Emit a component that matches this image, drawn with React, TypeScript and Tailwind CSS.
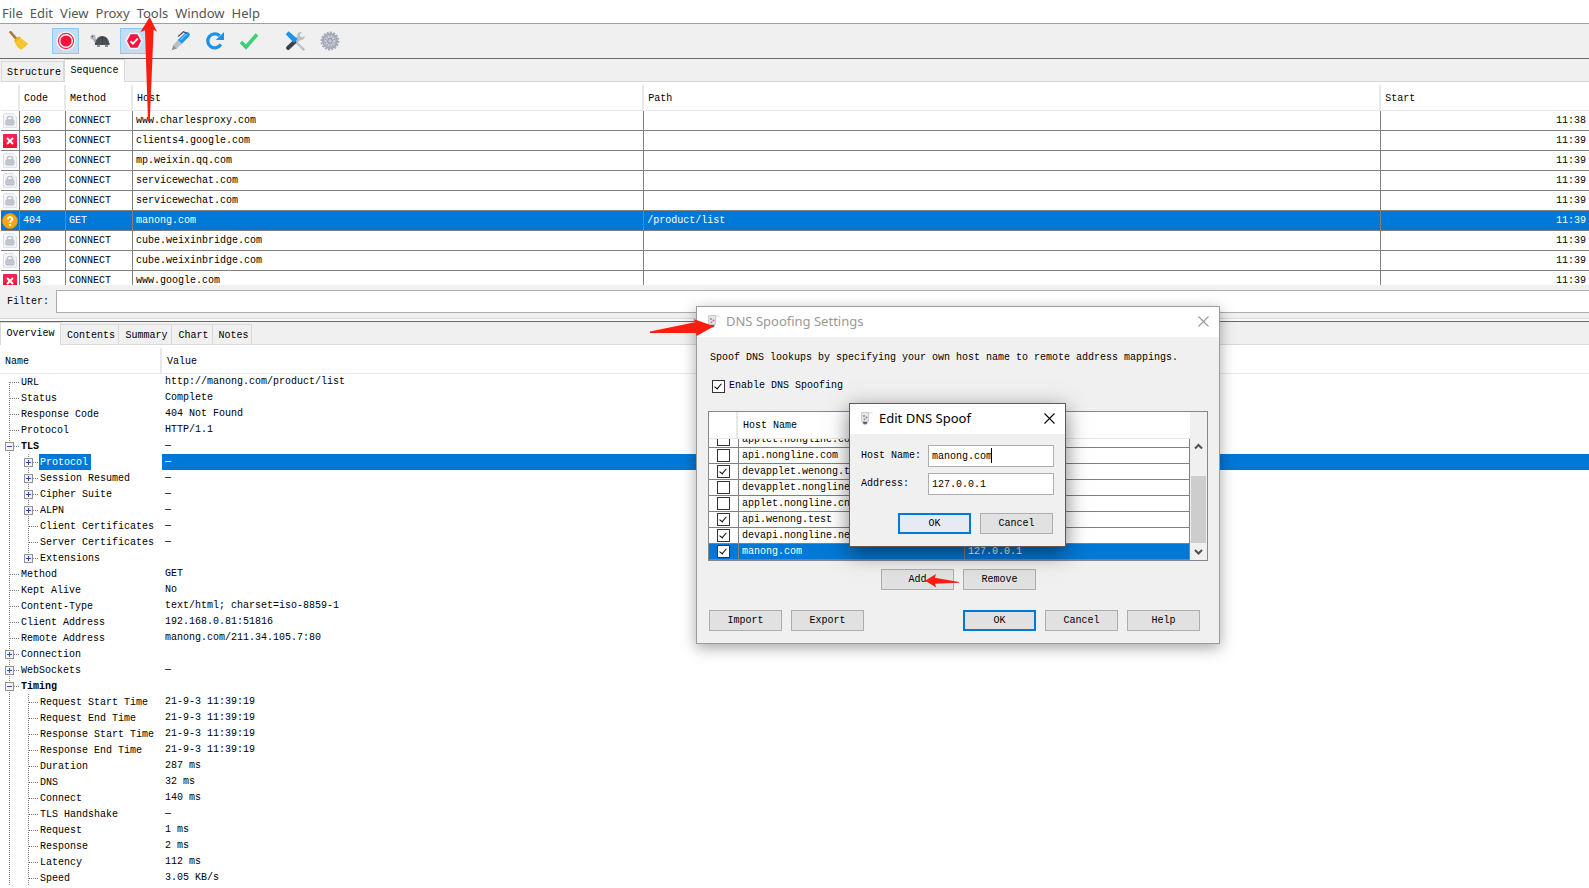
import type { ReactNode } from "react";

const UI = "font-['Noto_Sans',sans-serif]";

/* ---------- toolbar icons ---------- */

const Broom = () => (
  <svg width="20" height="20" viewBox="0 0 20 20">
    <path d="M1.500 1.200 8 8.600" stroke="#a97a45" strokeWidth="2.600" strokeLinecap="round" />
    <path d="M5.400 9 9.800 5.400 19 12.600c-1.200 2-3.600 4-6.800 6.200C8.500 17 6 13.500 5.400 9z" fill="#fbc730" />
    <path d="M5.400 9 9.800 5.400l1.800 1.400-5.600 4.600z" fill="#f2ad20" />
    <path d="M8.500 12.500l4 4.800M11 10.500l4.800 4.300" stroke="#eab020" strokeWidth=".7" />
  </svg>
);

const Record = () => (
  <svg width="20" height="20" viewBox="0 0 20 20">
    <circle cx="10" cy="10" r="9.600" fill="#f8f4f6" />
    <circle cx="10" cy="10" r="7.600" fill="none" stroke="#f0274f" strokeWidth="1.200" />
    <circle cx="10" cy="10" r="5.600" fill="#f7123a" />
  </svg>
);

const Turtle = () => (
  <svg width="20" height="16" viewBox="0 0 20 16">
    <path d="M4 5.500C5.500 8 5.500 10 8 11.500" stroke="#a5a9af" strokeWidth="2.400" fill="none" />
    <circle cx="3" cy="4" r="2.600" fill="#b4b8be" />
    <circle cx="2.400" cy="3.500" r=".7" fill="#444a52" />
    <path d="M5.200 10.500C5.600 5.500 9 3 12.500 3S18.800 6 19.300 10.500z" fill="#50555c" />
    <path d="M9 9V6l3.500-1.500L16 6v3M12.500 4v5.500" stroke="#353a40" fill="none" strokeWidth=".8" />
    <path d="M5 11h14.500" stroke="#3d4248" strokeWidth="1.800" />
    <path d="M7 11.800h3v2.200H7zM15 11.800h3v2.200h-3z" fill="#8b9096" />
  </svg>
);

const Breakpoint = () => (
  <svg width="18" height="18" viewBox="0 0 18 18">
    <path d="M5 1.500h8L17 9l-4 7.500H5L1 9z" fill="#f5143f" stroke="#f7f1f5" strokeWidth="1.600" />
    <path d="M5.500 9.200 8 11.600 12.700 6.600" stroke="#fff" strokeWidth="1.900" fill="none" />
  </svg>
);

const Pen = () => (
  <svg width="20" height="20" viewBox="0 0 20 20">
    <path d="M.8 19.200 2.300 14 6 17.600z" fill="#8c9198" />
    <path d="M2.200 14.200 6.800 9l4 3.800L5.800 17.600z" fill="#b8bdc6" />
    <path d="M6.800 9 14.300 1.800c1.300-1.200 2.600-.9 3.600 0s1.300 2.300.2 3.600L10.800 12.800z" fill="#1d97ee" />
    <path d="M9.500 9 16 2.600" stroke="#6cc0f8" strokeWidth="1.400" />
    <path d="M7 5.600 12.500 .8 16 2.500" fill="none" stroke="#3f4852" strokeWidth="1.200" />
  </svg>
);

const Refresh = () => (
  <svg width="20" height="20" viewBox="0 0 20 20">
    <path d="M15.800 13.400A7 7 0 1 1 14.600 4.800" fill="none" stroke="#1b93ee" strokeWidth="3.300" />
    <path d="M19 1v8h-8.200z" fill="#1b93ee" />
  </svg>
);

const Tick = () => (
  <svg width="20" height="18" viewBox="0 0 20 18">
    <path d="M2 10 7 15 18 2.500" fill="none" stroke="#3fcf73" strokeWidth="3.600" />
  </svg>
);

const Wrenches = () => (
  <svg width="21" height="20" viewBox="0 0 21 20">
    <path d="M18.500 18.500 9.500 9.500" stroke="#a9aebb" strokeWidth="2.200" strokeLinecap="round" />
    <path d="M3 17 12 8.500" stroke="#3b4148" strokeWidth="4" strokeLinecap="round" />
    <path d="M9.500 9 12.200 11.600 15.500 9c2.700.3 4.500-1.700 4.300-4.600l-2.300 2-2.300-.8-.4-2.400L17 1c-3.400-.6-5.300 1.500-4.700 4.300z" fill="#b9bec9" />
    <path d="M.8 3.200 3.600.2 12.600 8 9 12z" fill="#1c93ec" />
    <path d="M11.500 11.500l6.500 7" stroke="#c8ccd6" strokeWidth="1.400" />
  </svg>
);

const Gear = () => (
  <svg width="20" height="20" viewBox="0 0 20 20">
    <circle cx="10" cy="10" r="8.700" fill="none" stroke="#a3a7b5" strokeWidth="1.500" strokeDasharray="2 1.400" />
    <circle cx="10" cy="10" r="7.300" fill="#b4b8c4" stroke="#a0a4b2" strokeWidth="1.400" />
    <circle cx="10" cy="10" r="4.900" fill="#d5d8e0" />
    <path d="M10 4.500v11M4.800 8.300l10.400 3.400M6.800 14.500l6.400-9M13.200 14.500l-6.400-9M15.200 8.300 4.800 11.700" stroke="#a0a4b2" strokeWidth="1.100" />
    <circle cx="10" cy="10" r="2.300" fill="#c6c9d3" stroke="#9699a8" strokeWidth="1" />
  </svg>
);

/* ---------- row status icons ---------- */

const LockPage = () => (
  <svg width="14" height="16" viewBox="0 0 14 16">
    <path d="M1.500.5h8.500L13.500 4v10.500h-13v-13z" fill="#f3f5f8" stroke="#dcdfe4" />
    <path d="M10 .5V4h3.500" fill="#fff" stroke="#dcdfe4" strokeWidth=".8" />
    <path d="M4.200 7V5.800a2.700 2.500 0 0 1 5.400 0V7" fill="none" stroke="#bcc0ca" strokeWidth="1.300" />
    <rect x="2.200" y="6.300" width="9.400" height="6.200" rx="2.600" fill="#b9bec9" />
    <path d="M2.600 8.400h8.600M2.600 10.400h8.600" stroke="#d0d4db" strokeWidth=".7" />
  </svg>
);

const ErrorMark = () => (
  <svg width="14" height="14" viewBox="0 0 14 14">
    <rect width="14" height="14" rx="1" fill="#f52150" />
    <path d="M0 8h14v5a1 1 0 0 1-1 1H1a1 1 0 0 1-1-1z" fill="#ee1735" />
    <path d="M4 4l6 6M10 4l-6 6" stroke="#fff" strokeWidth="2" />
  </svg>
);

const Question = () => (
  <svg width="16" height="16" viewBox="0 0 16 16">
    <circle cx="8" cy="8" r="7.600" fill="#f9a51a" stroke="#e08c10" strokeWidth=".8" />
    <path d="M5.800 6.300c0-3 4.600-2.900 4.600-.2C10.400 7.900 8.100 7.700 8.100 9.800" fill="none" stroke="#fff" strokeWidth="1.700" />
    <circle cx="8.100" cy="12" r="1.100" fill="#fff" />
  </svg>
);

const Jug = () => (
  <svg width="13" height="14" viewBox="0 0 13 14">
    <path d="M1.500 1.500h7.300l-.4 8.500L6.500 13h-3L1.700 10z" fill="#e3e6e6" stroke="#bcc0c0" strokeWidth=".8" />
    <path d="M8.800 3c1.500-2.600 3.200-2 3.500.3" fill="none" stroke="#d5d8d8" strokeWidth=".9" />
    <path d="M2.600 10.800h5L6.300 13.300H3.800z" fill="#5d6264" />
    <circle cx="4" cy="5" r="1" fill="#5fae7c" />
    <circle cx="6.500" cy="6.500" r="1" fill="#d8607c" />
    <circle cx="4.500" cy="8.300" r=".9" fill="#6c8fd0" />
  </svg>
);

const Cross = () => (
  <svg width="11" height="11" viewBox="0 0 11 11">
    <path d="M.5.500l10 10M10.500.500l-10 10" stroke="currentColor" strokeWidth="1.100" />
  </svg>
);

/* ---------- shared controls ---------- */

function ToolButton({ label, on, children }: { label: string; on?: boolean; children: ReactNode }) {
  return (
    <button
      aria-label={label}
      className={`flex h-[26px] w-[27px] items-center justify-center border ${on ? "border-[#90c8f6] bg-[#c1dcf3]" : "border-transparent"}`}
    >
      {children}
    </button>
  );
}

function PushButton({ children, primary, focus }: { children: string; primary?: boolean; focus?: boolean }) {
  const look = primary
    ? `border-2 border-[#0078d7] ${focus ? "bg-[#e5eaf3]" : "bg-[#e1e1e1]"}`
    : "border border-[#adadad] bg-[#e1e1e1]";
  return <button className={`h-[21px] w-[73px] leading-3 ${look}`}>{children}</button>;
}

function Tick13({ checked, label }: { checked?: boolean; label: string }) {
  return (
    <input
      type="checkbox"
      aria-label={label}
      defaultChecked={checked}
      className="block size-[13px] shrink-0 appearance-none border border-[#333] bg-white checked:before:mt-px checked:before:ml-[3px] checked:before:block checked:before:h-[7px] checked:before:w-[4px] checked:before:rotate-[40deg] checked:before:border-r checked:before:border-b checked:before:border-black"
    />
  );
}

function Tabs({ items, active }: { items: { name: string; width: string }[]; active: number }) {
  return (
    <div role="tablist" className="flex h-[23px] items-end border-b border-[#d9d9d9] bg-[#f0f0f0]">
      {items.map((t, i) => (
        <button
          key={t.name}
          role="tab"
          aria-selected={i === active}
          className={
            i === active
              ? `-mb-px h-[23px] border border-b-0 border-[#d9d9d9] bg-white ${t.width}`
              : `h-[20px] border-t border-r border-[#d9d9d9] pt-[3px] pl-[3px] first:border-l ${t.width}`
          }
        >
          {t.name}
        </button>
      ))}
    </div>
  );
}

/* ---------- session sequence ---------- */

type Session = { kind: "ok" | "error" | "warn"; code: string; method: string; host: string; path?: string; start: string };

const sessions: Session[] = [
  { kind: "ok", code: "200", method: "CONNECT", host: "www.charlesproxy.com", start: "11:38" },
  { kind: "error", code: "503", method: "CONNECT", host: "clients4.google.com", start: "11:39" },
  { kind: "ok", code: "200", method: "CONNECT", host: "mp.weixin.qq.com", start: "11:39" },
  { kind: "ok", code: "200", method: "CONNECT", host: "servicewechat.com", start: "11:39" },
  { kind: "ok", code: "200", method: "CONNECT", host: "servicewechat.com", start: "11:39" },
  { kind: "warn", code: "404", method: "GET", host: "manong.com", path: "/product/list", start: "11:39" },
  { kind: "ok", code: "200", method: "CONNECT", host: "cube.weixinbridge.com", start: "11:39" },
  { kind: "ok", code: "200", method: "CONNECT", host: "cube.weixinbridge.com", start: "11:39" },
  { kind: "error", code: "503", method: "CONNECT", host: "www.google.com", start: "11:39" },
];

function SequenceTable() {
  const th = "h-[26px] border-r-2 border-b border-[#e8e8e8] pt-[3px] pl-1 text-left font-normal last:border-r-0";
  const td = "h-5 border-r border-b border-[#808080] px-[3px] last:border-r-0";
  return (
    <div className="h-[203px] shrink-0 overflow-hidden pt-[3px] pl-px">
      <table className="w-full table-fixed border-separate border-spacing-0">
        <colgroup>
          <col className="w-[19px]" />
          <col className="w-[46px]" />
          <col className="w-[67px]" />
          <col className="w-[32.2%]" />
          <col className="w-[46.400%]" />
          <col />
        </colgroup>
        <thead>
          <tr>
            <th className={th} aria-label="Status" />
            <th className={th}>Code</th>
            <th className={th}>Method</th>
            <th className={th}>Host</th>
            <th className={th}>Path</th>
            <th className={th}>Start</th>
          </tr>
        </thead>
        <tbody>
          {sessions.map((s, i) => (
            <tr key={i} className={s.kind === "warn" ? "bg-[#0078d7] text-white" : ""}>
              <td className="h-5 border-r border-b border-[#808080] p-0">
                <span className="flex justify-center">
                  {s.kind === "ok" ? <LockPage /> : s.kind === "error" ? <ErrorMark /> : <Question />}
                </span>
              </td>
              <td className={td}>{s.code}</td>
              <td className={td}>{s.method}</td>
              <td className={td}>{s.host}</td>
              <td className={td}>{s.path}</td>
              <td className={`${td} text-right`}>{s.start}</td>
            </tr>
          ))}
        </tbody>
      </table>
    </div>
  );
}

/* ---------- overview tree ---------- */

type Node = { name: string; value?: string; depth?: 1; box?: "+" | "-"; first?: boolean; last?: boolean; selected?: boolean };

const nodes: Node[] = [
  { name: "URL", value: "http://manong.com/product/list", first: true },
  { name: "Status", value: "Complete" },
  { name: "Response Code", value: "404 Not Found" },
  { name: "Protocol", value: "HTTP/1.1" },
  { name: "TLS", value: "—", box: "-" },
  { name: "Protocol", value: "—", depth: 1, box: "+", selected: true },
  { name: "Session Resumed", value: "—", depth: 1, box: "+" },
  { name: "Cipher Suite", value: "—", depth: 1, box: "+" },
  { name: "ALPN", value: "—", depth: 1, box: "+" },
  { name: "Client Certificates", value: "—", depth: 1 },
  { name: "Server Certificates", value: "—", depth: 1 },
  { name: "Extensions", depth: 1, box: "+", last: true },
  { name: "Method", value: "GET" },
  { name: "Kept Alive", value: "No" },
  { name: "Content-Type", value: "text/html; charset=iso-8859-1" },
  { name: "Client Address", value: "192.168.0.81:51816" },
  { name: "Remote Address", value: "manong.com/211.34.105.7:80" },
  { name: "Connection", box: "+" },
  { name: "WebSockets", value: "—", box: "+" },
  { name: "Timing", box: "-" },
  { name: "Request Start Time", value: "21-9-3 11:39:19", depth: 1 },
  { name: "Request End Time", value: "21-9-3 11:39:19", depth: 1 },
  { name: "Response Start Time", value: "21-9-3 11:39:19", depth: 1 },
  { name: "Response End Time", value: "21-9-3 11:39:19", depth: 1 },
  { name: "Duration", value: "287 ms", depth: 1 },
  { name: "DNS", value: "32 ms", depth: 1 },
  { name: "Connect", value: "140 ms", depth: 1 },
  { name: "TLS Handshake", value: "—", depth: 1 },
  { name: "Request", value: "1 ms", depth: 1 },
  { name: "Response", value: "2 ms", depth: 1 },
  { name: "Latency", value: "112 ms", depth: 1 },
  { name: "Speed", value: "3.05 KB/s", depth: 1 },
];

function Guides({ node }: { node: Node }) {
  const width = node.depth ? 39 : 20;
  const x = node.depth ? 28.5 : 9.5;
  return (
    <svg width={width} height="16" className="shrink-0" shapeRendering="crispEdges">
      <g stroke="#808080" strokeDasharray="1 1">
        <path d={node.first ? "M9.500 8v8" : "M9.500 0v16"} />
        {node.depth && <path d={node.last ? "M28.500 0v8" : "M28.500 0v16"} />}
        <path d={`M${x} 8.500H${width}`} />
      </g>
      {node.box && (
        <g>
          <rect x={x - 4} y="4.500" width="8" height="8" fill="#f4f4f4" stroke="#919191" />
          <path d={`M${x - 2.5} 8.500h5`} stroke="#2b50a0" />
          {node.box === "+" && <path d={`M${x} 6v5`} stroke="#2b50a0" />}
        </g>
      )}
    </svg>
  );
}

function OverviewTree() {
  const th = "h-[26px] border-b border-[#e8e8e8] pt-[3px] pl-[5px] text-left font-normal";
  return (
    <div className="min-h-0 flex-1 overflow-hidden pt-[3px]">
      <table className="w-full table-fixed border-separate border-spacing-0">
        <colgroup>
          <col className="w-[162px]" />
          <col />
        </colgroup>
        <thead>
          <tr>
            <th className={`${th} border-r-2`}>Name</th>
            <th className={th}>Value</th>
          </tr>
        </thead>
        <tbody>
          {nodes.map((n, i) => (
            <tr key={i}>
              <td className="h-4 p-0 align-top">
                <span className="flex h-4">
                  <Guides node={n} />
                  <span
                    className={`px-px leading-[18px] whitespace-nowrap ${n.selected ? "bg-[#0078d7] pr-[3px] text-white" : ""} ${n.box === "-" ? "font-bold" : ""}`}
                  >
                    {n.name}
                  </span>
                </span>
              </td>
              <td className={`h-4 py-0 pr-0 pl-[3px] align-top leading-4 ${n.selected ? "bg-[#0078d7] text-white" : ""}`}>
                {n.value}
              </td>
            </tr>
          ))}
        </tbody>
      </table>
    </div>
  );
}

/* ---------- dialogs ---------- */

const spoofs = [
  { on: false, host: "applet.nongline.com", address: "" },
  { on: false, host: "api.nongline.com", address: "" },
  { on: true, host: "devapplet.wenong.test", address: "" },
  { on: false, host: "devapplet.nongline.com", address: "" },
  { on: false, host: "applet.nongline.cn", address: "" },
  { on: true, host: "api.wenong.test", address: "" },
  { on: true, host: "devapi.nongline.net", address: "" },
  { on: true, host: "manong.com", address: "127.0.0.1", selected: true },
];

function TitleBar({ title, muted }: { title: string; muted?: boolean }) {
  return (
    <header className={`flex h-[30px] items-center bg-white pr-2.5 pb-0.5 pl-2.5 ${UI} text-[13px] ${muted ? "text-[#999]" : "text-black"}`}>
      <Jug />
      <h2 className="ml-1.5 flex-1 leading-4">{title}</h2>
      <button aria-label="Close">
        <Cross />
      </button>
    </header>
  );
}

function SettingsDialog() {
  const td = "h-4 border-r border-b border-[#808080] px-[3px] leading-[14px]";
  return (
    <section
      aria-label="DNS Spoofing Settings"
      className="absolute top-[306px] left-[696px] flex h-[338px] w-[524px] flex-col border border-[#9b9b9b] bg-[#f0f0f0] shadow-[0_4px_14px_rgba(0,0,0,0.35)]"
    >
      <TitleBar title="DNS Spoofing Settings" muted />
      <div className="flex flex-1 flex-col px-[11px] pt-[13px]">
        <p className="pl-0.5 leading-4">Spoof DNS lookups by specifying your own host name to remote address mappings.</p>
        <label className="mt-2.5 flex h-5 items-center gap-1 pl-1">
          <Tick13 checked label="Enable DNS Spoofing" />
          Enable DNS Spoofing
        </label>
        <div className="mt-[15px] flex h-[150px] border border-[#828790]">
          <div className="flex h-full flex-1 flex-col overflow-hidden bg-white">
            <div className="flex h-[27px] shrink-0 border-b border-[#e8e8e8] leading-[28px]">
              <span className="w-[29px] border-r-2 border-[#e8e8e8]" />
              <span className="pl-[5px]">Host Name</span>
            </div>
            <div className="flex min-h-0 flex-1 flex-col justify-end overflow-hidden">
              <table className="w-full table-fixed border-separate border-spacing-0">
                <colgroup>
                  <col className="w-[30px]" />
                  <col className="w-[226px]" />
                  <col />
                </colgroup>
                <tbody>
                  {spoofs.map((s) => (
                    <tr key={s.host} className={s.selected ? "bg-[#0078d7] text-white" : ""}>
                      <td className="h-4 border-r border-b border-[#808080] p-0">
                        <span className="flex justify-center">
                          <Tick13 checked={s.on} label={s.host} />
                        </span>
                      </td>
                      <td className={td}>{s.host}</td>
                      <td className={td}>{s.address}</td>
                    </tr>
                  ))}
                </tbody>
              </table>
            </div>
          </div>
          <div className="flex w-[17px] flex-col bg-[#f0f0f0] pt-[26px]">
            <svg width="17" height="17" viewBox="0 0 17 17" className="shrink-0">
              <path d="M5 10.500 8.500 7l3.500 3.500" fill="none" stroke="#505050" strokeWidth="2" />
            </svg>
            <div className="mx-px mt-[21px] flex-1 bg-[#cdcdcd]" />
            <svg width="17" height="17" viewBox="0 0 17 17" className="shrink-0">
              <path d="M5 7 8.500 10.500 12 7" fill="none" stroke="#505050" strokeWidth="2" />
            </svg>
          </div>
        </div>
        <div className="mt-2 flex justify-center gap-[9px] pl-px">
          <PushButton>Add</PushButton>
          <PushButton>Remove</PushButton>
        </div>
        <div className="mt-5 flex gap-[9px] pr-2 pl-px">
          <PushButton>Import</PushButton>
          <PushButton>Export</PushButton>
          <span className="flex-1" />
          <PushButton primary>OK</PushButton>
          <PushButton>Cancel</PushButton>
          <PushButton>Help</PushButton>
        </div>
      </div>
    </section>
  );
}

function EditDialog() {
  const field = "h-[22px] w-[126px] border border-[#abadb3] bg-white px-[3px] outline-none";
  return (
    <section
      aria-label="Edit DNS Spoof"
      className="absolute top-[403px] left-[849px] flex h-[144px] w-[217px] flex-col border border-[#5a5a5a] bg-[#f0f0f0] shadow-[0_6px_20px_rgba(0,0,0,0.5)]"
    >
      <TitleBar title="Edit DNS Spoof" />
      <div className="flex flex-1 flex-col gap-1.5 px-[11px] pt-[11px]">
        <div className="flex items-center justify-between">
          <label htmlFor="host">Host Name:</label>
          <div className="relative">
            <input id="host" defaultValue="manong.com" className={`${field} block`} />
            <span className="absolute top-[3px] left-[63px] h-[15px] w-px bg-black" />
          </div>
        </div>
        <div className="flex items-center justify-between">
          <label htmlFor="address">Address:</label>
          <input id="address" defaultValue="127.0.0.1" className={field} />
        </div>
        <div className="mt-3 flex justify-end gap-[9px] pr-px">
          <PushButton primary focus>OK</PushButton>
          <PushButton>Cancel</PushButton>
        </div>
      </div>
    </section>
  );
}

/* ---------- page ---------- */

export default function App() {
  return (
    <div className="relative flex h-screen flex-col overflow-hidden bg-white font-['Liberation_Mono',monospace] text-[10px] leading-4 text-black">
      <nav className={`flex h-6 shrink-0 items-center gap-[7px] border-b border-[#a0a0a0] pt-0.5 pl-0.5 ${UI} text-[13px] text-[#555]`}>
        {["File", "Edit", "View", "Proxy", "Tools", "Window", "Help"].map((m) => (
          <button key={m}>{m}</button>
        ))}
      </nav>

      <div role="toolbar" className="flex h-[35px] shrink-0 items-center gap-5 border-b border-[#696969] bg-[#f0f0f0] pl-[5px]">
        <ToolButton label="Clear"><Broom /></ToolButton>
        <div className="flex gap-[7px]">
          <ToolButton label="Record" on><Record /></ToolButton>
          <ToolButton label="Throttle"><Turtle /></ToolButton>
          <ToolButton label="Breakpoints" on><Breakpoint /></ToolButton>
        </div>
        <div className="flex gap-[7px]">
          <ToolButton label="Compose"><Pen /></ToolButton>
          <ToolButton label="Repeat"><Refresh /></ToolButton>
          <ToolButton label="Validate"><Tick /></ToolButton>
        </div>
        <div className="flex gap-[7px]">
          <ToolButton label="Tools"><Wrenches /></ToolButton>
          <ToolButton label="Settings"><Gear /></ToolButton>
        </div>
      </div>

      <div className="shrink-0 bg-[#f0f0f0] pl-px">
        <Tabs
          items={[
            { name: "Structure", width: "w-[63px]" },
            { name: "Sequence", width: "w-[61px]" },
          ]}
          active={1}
        />
      </div>
      <SequenceTable />

      <div className="flex h-[33px] shrink-0 items-center gap-2 bg-[#f0f0f0] pl-[7px]">
        <label htmlFor="filter" className="w-[41px] leading-4">Filter:</label>
        <input id="filter" className="h-[23px] flex-1 border border-r-0 border-[#abadb3] bg-white px-1 outline-none" />
      </div>
      <div className="h-1 shrink-0 border-t border-b border-t-[#d9d9d9] border-b-[#696969] bg-[#fafafa]" />

      <div className="shrink-0">
        <Tabs
          items={[
            { name: "Overview", width: "w-[61px]" },
            { name: "Contents", width: "w-[58px]" },
            { name: "Summary", width: "w-[53px]" },
            { name: "Chart", width: "w-[41px]" },
            { name: "Notes", width: "w-[39px]" },
          ]}
          active={0}
        />
      </div>
      <OverviewTree />

      <SettingsDialog />
      <EditDialog />

      <svg className="pointer-events-none absolute top-[16px] left-[138px]" width="22" height="108" viewBox="138 16 22 108" fill="#fb1d10">
        <path d="M149.700 17 157 31.800 153.600 29.800 149.800 121a1 1 0 0 1-1.800 0L145 30.200 140.400 32z" />
      </svg>
      <svg className="pointer-events-none absolute top-[316px] left-[648px]" width="70" height="22" viewBox="648 316 70 22" fill="#fb1d10">
        <path d="M650 331.400 695 322.300 693.600 319 714 326.200 696.600 336 695.800 333 650 333z" />
      </svg>
      <svg className="pointer-events-none absolute top-[572px] left-[923px]" width="38" height="18" viewBox="923 572 38 18" fill="#fb1d10">
        <path d="M925 580.700 936 574 934.800 577.800 959 582v.8L935 583.800 936.300 587.400z" />
      </svg>
    </div>
  );
}
